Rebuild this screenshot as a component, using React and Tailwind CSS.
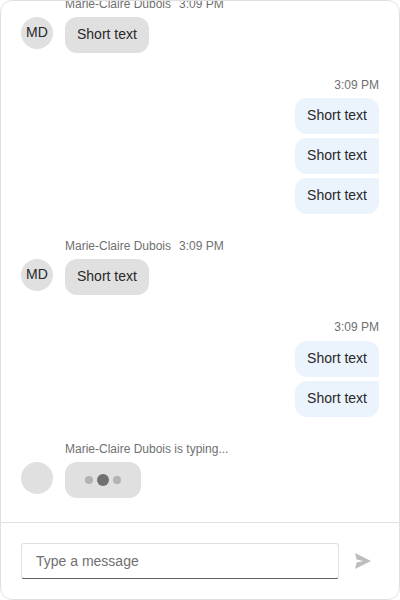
import React from "react";

function Avatar({ initials }) {
  return (
    <div className="h-8 w-8 shrink-0 rounded-full bg-[#e0e0e0] text-center text-sm leading-[30px] text-[#282828]">
      {initials}
    </div>
  );
}

function Incoming({ initials, header, children }) {
  return (
    <div>
      <div className="flex h-[21px] gap-2 pl-11 text-xs leading-[17px] text-[#707070]">{header}</div>
      <div className="flex items-start gap-3">
        <Avatar initials={initials} />
        {children}
      </div>
    </div>
  );
}

function IncomingText({ text }) {
  return (
    <Incoming
      initials="MD"
      header={
        <>
          <span>Marie-Claire Dubois</span>
          <span>3:09 PM</span>
        </>
      }
    >
      <div className="h-9 rounded-xl bg-[#e0e0e0] px-3 pt-[7px] text-sm leading-5 text-[#282828]">{text}</div>
    </Incoming>
  );
}

function Outgoing({ messages, headerClass = "h-[21px]" }) {
  return (
    <div className="flex flex-col items-end">
      <div className={`text-xs leading-[17px] text-[#707070] ${headerClass}`}>3:09 PM</div>
      <div className="flex flex-col gap-1">
        {messages.map((text, i) => {
          const first = i === 0 ? "rounded-tr-xl" : "";
          const last = i === messages.length - 1 ? "rounded-br-xl" : "";
          return (
            <div
              key={i}
              className={`h-9 rounded-l-xl bg-[#ebf3fd] px-3 pt-[7px] text-sm leading-5 text-[#282828] ${first} ${last}`}
            >
              {text}
            </div>
          );
        })}
      </div>
    </div>
  );
}

export default function App() {
  return (
    <div className="flex h-[600px] w-[400px] flex-col overflow-hidden rounded-xl border border-[#e0e0e0] bg-white font-['Liberation_Sans',Arial,sans-serif]">
      <div className="flex min-h-0 flex-1 flex-col justify-end gap-6 overflow-hidden px-5 pb-6">
        <IncomingText text="Short text" />
        <Outgoing messages={["Short text", "Short text", "Short text"]} />
        <IncomingText text="Short text" />
        <Outgoing messages={["Short text", "Short text"]} headerClass="h-[22px]" />
        <Incoming header={<span>Marie-Claire Dubois is typing...</span>}>
          <div className="flex h-9 items-center gap-1 rounded-xl bg-[#e0e0e0] px-5">
            <span className="h-2 w-2 rounded-full bg-[#b3b3b3]" />
            <span className="h-3 w-3 rounded-full bg-[#707070]" />
            <span className="h-2 w-2 rounded-full bg-[#b3b3b3]" />
          </div>
        </Incoming>
      </div>
      <div className="flex h-[77px] shrink-0 items-start border-t border-[#e0e0e0] pl-5 pt-5">
        <input
          className="h-9 w-[318px] rounded-[3px] border border-[#e0e0e0] border-b-[#616161] px-3.5 text-sm text-[#282828] outline-none placeholder:text-[#707070]"
          placeholder="Type a message"
        />
        <button className="ml-2 flex h-9 w-8 items-center justify-center" aria-label="Send">
          <svg width="16" height="16" viewBox="0 0 16 16" fill="#bdbdbd">
            <path d="M0 0L16 8L0 16L1.6 9.6L8.4 8L1.6 6.4Z" />
          </svg>
        </button>
      </div>
    </div>
  );
}
